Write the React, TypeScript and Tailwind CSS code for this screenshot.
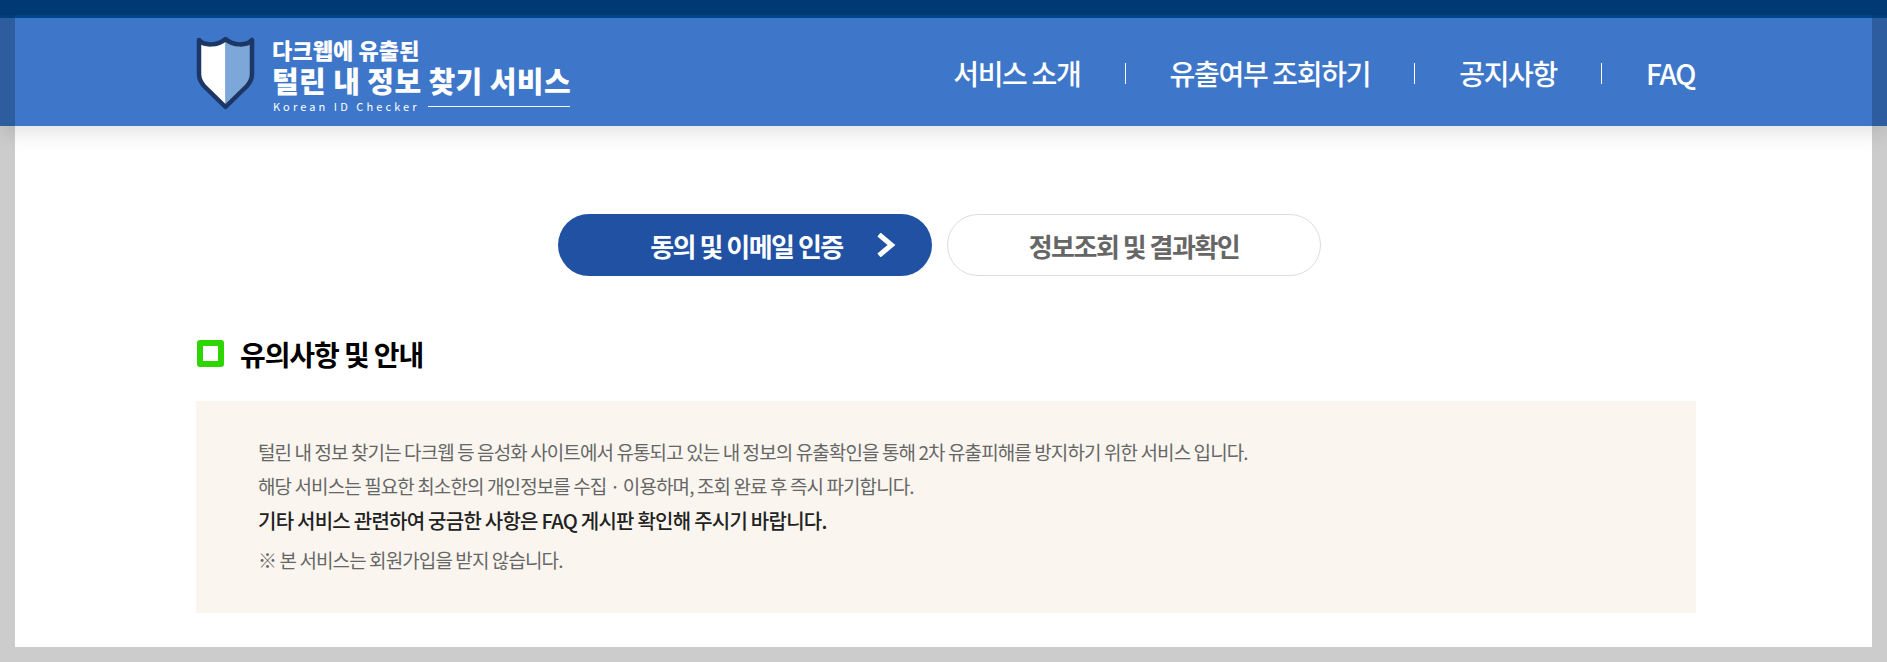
import React from 'react';

const KR = "font-['Noto_Sans_CJK_KR','Noto_Sans',sans-serif]";

const Shield = () => (
  <svg width="59" height="75" viewBox="0 0 59 75" className="shrink-0 mt-[3px]">
    <path d="M3 4 C8 10 22 10 29.5 3 L29.5 71 L8 50 C4.5 46 3 43 3 38 Z" fill="#ffffff" />
    <path d="M29.5 3 C37 10 51 10 56 4 L56 38 C56 43 54.5 46 51 50 L29.5 71 Z" fill="#7da7d9" />
    <path
      d="M3 4 C8 10 22 10 29.5 3 C37 10 51 10 56 4 L56 38 C56 43 54.5 46 51 50 L29.5 71 L8 50 C4.5 46 3 43 3 38 Z"
      fill="none"
      stroke="#1c3665"
      strokeWidth="4.5"
      strokeLinejoin="round"
    />
  </svg>
);

const Divider = () => <span className="w-px h-[21px] bg-white" />;

const Chevron = () => (
  <svg width="20" height="24" viewBox="0 0 20 24" className="shrink-0">
    <path d="M3 1.5 L15.5 12 L3 22.5" fill="none" stroke="#ffffff" strokeWidth="5" />
  </svg>
);

const SideStrip = () => (
  <div className="w-[15px] flex flex-col">
    <div className="h-[3px] bg-[#003f7e]" />
    <div className="flex-1 bg-[#2e5d9f]" />
  </div>
);

const App: React.FC = () => {
  return (
    <div className={`${KR} w-full h-[662px] overflow-hidden bg-[#cccccc] flex flex-col`}>
      <div className="h-[15px] bg-[#003a75]" />
      <div className="flex h-[111px] relative z-10 shadow-[0_6px_20px_rgba(0,0,0,0.12)]">
        <SideStrip />
        <div className="flex-1 flex flex-col">
          <div className="h-[3px] bg-[#00468c]" />
          <header className="flex-1 bg-[#3e77c9] pl-[181px] pr-[177px] flex items-center justify-between text-white">
            <div className="flex items-start gap-[17px] mt-[2px]">
              <Shield />
              <div className="flex flex-col pt-[2px]">
                <div className="text-[22px] leading-[28px] font-black tracking-[0.1px] whitespace-nowrap">다크웹에 유출된</div>
                <div className="text-[29px] leading-[33px] mt-[1px] font-black tracking-[0.4px] whitespace-nowrap">털린 내 정보 찾기 서비스</div>
                <div className="flex items-center gap-[8px] mt-[2px]">
                  <span className="text-[11px] leading-[14px] tracking-[3.1px] pl-[1px] whitespace-nowrap">Korean ID Checker</span>
                  <span className="w-[142px] h-px bg-white" />
                </div>
              </div>
            </div>
            <nav className="flex items-center gap-[44px] pt-[2px] text-[28px] leading-[36px] font-medium tracking-[-1.3px] whitespace-nowrap">
              <span>서비스 소개</span>
              <Divider />
              <span>유출여부 조회하기</span>
              <Divider />
              <span>공지사항</span>
              <Divider />
              <span>FAQ</span>
            </nav>
          </header>
        </div>
        <SideStrip />
      </div>
      <div className="h-[536px] px-[15px] pb-[15px] flex">
        <main className="flex-1 bg-white pt-[88px] pl-[181px] pr-[176px]">
          <div className="flex justify-center gap-[15px] pr-[13px]">
            <div className="w-[374px] h-[62px] rounded-full bg-[#2051a3] text-white flex items-center justify-center gap-[33px] pl-[56px] text-[26px] font-bold tracking-[-1.5px] whitespace-nowrap">
              <span>동의 및 이메일 인증</span>
              <Chevron />
            </div>
            <div className="w-[374px] h-[62px] rounded-full border border-[#dddddd] bg-white text-[#666666] flex items-center justify-center text-[26px] font-bold tracking-[-1.5px] whitespace-nowrap">
              정보조회 및 결과확인
            </div>
          </div>
          <h2 className="flex items-center gap-[16px] mt-[58px] text-[28px] leading-[40px] font-bold tracking-[-1.1px] text-black">
            <span className="w-[27px] h-[27px] ml-[1px] -mt-[1px] rounded-[3px] border-[6px] border-[#2fd500] bg-white" />
            유의사항 및 안내
          </h2>
          <div className="mt-[27px] h-[212px] bg-[#faf6ef] pt-[34px] pl-[62px] text-[19px] leading-[34px] tracking-[-0.9px] text-[#666666]">
            <p>털린 내 정보 찾기는 다크웹 등 음성화 사이트에서 유통되고 있는 내 정보의 유출확인을 통해 2차 유출피해를 방지하기 위한 서비스 입니다.</p>
            <p>해당 서비스는 필요한 최소한의 개인정보를 수집 · 이용하며, 조회 완료 후 즉시 파기합니다.</p>
            <p className="mt-[1px] text-[20px] tracking-[-0.75px] font-medium text-[#222222]">기타 서비스 관련하여 궁금한 사항은 FAQ 게시판 확인해 주시기 바랍니다.</p>
            <p className="mt-[5px]">※ 본 서비스는 회원가입을 받지 않습니다.</p>
          </div>
        </main>
      </div>
    </div>
  );
};

export default App;
